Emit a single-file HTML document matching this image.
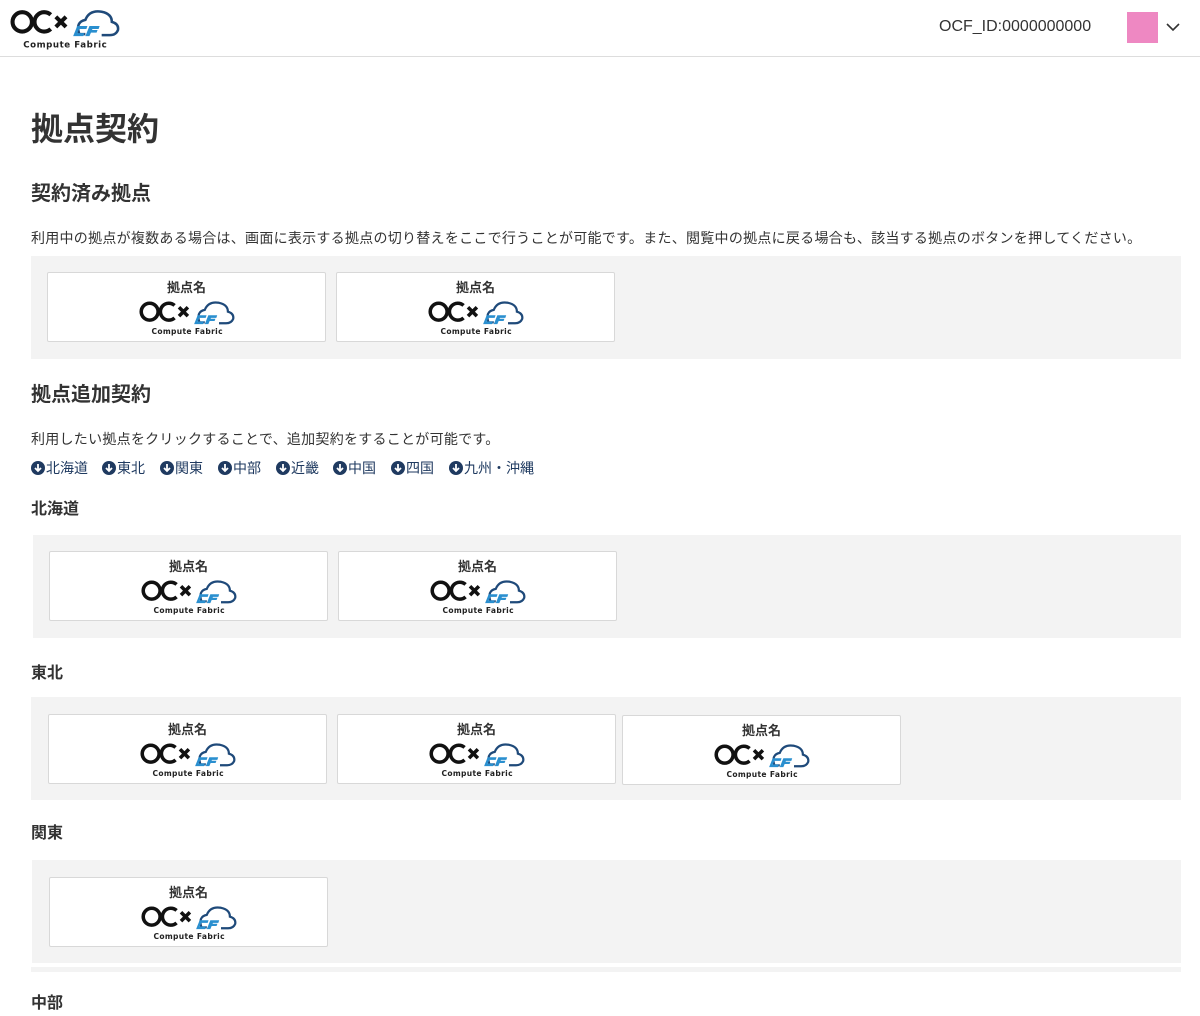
<!DOCTYPE html>
<html><head><meta charset="utf-8"><style>
*{margin:0;padding:0;box-sizing:border-box}
body{width:1200px;height:1016px;overflow:hidden;background:#fff;font-family:"Liberation Sans","Noto Sans CJK JP",sans-serif;color:#333;position:relative}
.a{position:absolute;white-space:nowrap}
.hdr{position:absolute;left:0;top:0;width:1200px;height:57px;border-bottom:1px solid #ddd}
.panel{position:absolute;background:#f3f3f3}
.card{position:absolute;width:279px;height:70px;background:#fff;border:1px solid #d8d8d8;border-radius:2px;text-align:center}
.card .t{font-size:13px;font-weight:bold;color:#333;margin-top:7px;line-height:16px}
.card svg{display:block;margin:2px auto 0}
h1{position:absolute;left:31px;top:104px;font-size:32px;font-weight:bold;color:#333}
h2{position:absolute;left:31px;font-size:20px;font-weight:bold;color:#333}
h3{position:absolute;left:31px;font-size:16px;font-weight:bold;color:#333}
p{position:absolute;left:31px;font-size:14px;color:#333;letter-spacing:0.27px}
.lk{position:absolute;top:458px;font-size:14px;color:#1f3a60;display:flex;align-items:center;height:20px;white-space:nowrap}
.lk svg{margin-right:1px}
</style></head><body>
<div class="hdr"></div>
<svg class="a" style="left:10px;top:6px" width="110" height="44" viewBox="0 0 108 40">
<circle cx="12" cy="14" r="9.5" fill="none" stroke="#111" stroke-width="4"/>
<path d="M40 7 A9.5 9.5 0 1 0 40 21" fill="none" stroke="#111" stroke-width="4"/>
<path d="M45 9 L55 19 M55 9 L45 19" stroke="#111" stroke-width="4"/>
<path d="M74 26 L68 26 Q64 14 74 12 Q78 2 90 4 Q100 6 100 14 Q107 16 106 22 Q104 27 98 27 L90 27" fill="none" stroke="#1f4a7a" stroke-width="2.5"/>
<path d="M62 28 L66 18 L76 18 L75 21 L68 21 L66 25 L73 25 L72 28Z" fill="#2a8fcf"/>
<path d="M74 28 L78 18 L88 18 L87 21 L81 21 L80.5 22 L86 22 L85 24.5 L79.5 24.5 L78 28Z" fill="#2a8fcf"/>
<text x="54" y="39" font-family="DejaVu Sans,sans-serif" font-size="8.5" font-weight="bold" text-anchor="middle" fill="#222" textLength="82" lengthAdjust="spacing">Compute Fabric</text>
</svg>
<div class="a" style="left:939px;top:18px;font-size:16px;color:#333">OCF_ID:0000000000</div>
<div class="a" style="left:1127px;top:12px;width:31px;height:31px;background:#ee88c2"></div>
<svg class="a" style="left:1166px;top:22px" width="14" height="10"><path d="M1 2 L7 8 L13 2" fill="none" stroke="#333" stroke-width="1.6"/></svg>

<h1>拠点契約</h1>
<h2 style="top:177px">契約済み拠点</h2>
<p style="top:228px">利用中の拠点が複数ある場合は、画面に表示する拠点の切り替えをここで行うことが可能です。また、閲覧中の拠点に戻る場合も、該当する拠点のボタンを押してください。</p>
<div class="panel" style="left:31px;top:256px;width:1150px;height:103px"></div>
<h2 style="top:378px">拠点追加契約</h2>
<p style="top:429px">利用したい拠点をクリックすることで、追加契約をすることが可能です。</p>
<div class="lk" style="left:31px"><svg width="14" height="14"><circle cx="7" cy="7" r="7" fill="#1f3a60"/><path d="M7 3 V10 M4 7 L7 10 L10 7" stroke="#fff" stroke-width="1.8" fill="none"/></svg>北海道</div>
<div class="lk" style="left:102px"><svg width="14" height="14"><circle cx="7" cy="7" r="7" fill="#1f3a60"/><path d="M7 3 V10 M4 7 L7 10 L10 7" stroke="#fff" stroke-width="1.8" fill="none"/></svg>東北</div>
<div class="lk" style="left:160px"><svg width="14" height="14"><circle cx="7" cy="7" r="7" fill="#1f3a60"/><path d="M7 3 V10 M4 7 L7 10 L10 7" stroke="#fff" stroke-width="1.8" fill="none"/></svg>関東</div>
<div class="lk" style="left:218px"><svg width="14" height="14"><circle cx="7" cy="7" r="7" fill="#1f3a60"/><path d="M7 3 V10 M4 7 L7 10 L10 7" stroke="#fff" stroke-width="1.8" fill="none"/></svg>中部</div>
<div class="lk" style="left:276px"><svg width="14" height="14"><circle cx="7" cy="7" r="7" fill="#1f3a60"/><path d="M7 3 V10 M4 7 L7 10 L10 7" stroke="#fff" stroke-width="1.8" fill="none"/></svg>近畿</div>
<div class="lk" style="left:333px"><svg width="14" height="14"><circle cx="7" cy="7" r="7" fill="#1f3a60"/><path d="M7 3 V10 M4 7 L7 10 L10 7" stroke="#fff" stroke-width="1.8" fill="none"/></svg>中国</div>
<div class="lk" style="left:391px"><svg width="14" height="14"><circle cx="7" cy="7" r="7" fill="#1f3a60"/><path d="M7 3 V10 M4 7 L7 10 L10 7" stroke="#fff" stroke-width="1.8" fill="none"/></svg>四国</div>
<div class="lk" style="left:449px"><svg width="14" height="14"><circle cx="7" cy="7" r="7" fill="#1f3a60"/><path d="M7 3 V10 M4 7 L7 10 L10 7" stroke="#fff" stroke-width="1.8" fill="none"/></svg>九州・沖縄</div>
<h3 style="top:495px">北海道</h3>
<div class="panel" style="left:33px;top:535px;width:1148px;height:103px"></div>
<h3 style="top:659px">東北</h3>
<div class="panel" style="left:31px;top:697px;width:1150px;height:103px"></div>
<h3 style="top:819px">関東</h3>
<div class="panel" style="left:32px;top:860px;width:1149px;height:103px"></div>
<div class="panel" style="left:31px;top:967px;width:1150px;height:5px"></div>
<h3 style="top:989px">中部</h3>

<div class="card" style="left:47px;top:272px"><div class="t">拠点名</div><svg width="96" height="38" viewBox="0 0 108 40"><circle cx="12" cy="14" r="9.5" fill="none" stroke="#111" stroke-width="4"/><path d="M40 7 A9.5 9.5 0 1 0 40 21" fill="none" stroke="#111" stroke-width="4"/><path d="M45 9 L55 19 M55 9 L45 19" stroke="#111" stroke-width="4"/><path d="M74 26 L68 26 Q64 14 74 12 Q78 2 90 4 Q100 6 100 14 Q107 16 106 22 Q104 27 98 27 L90 27" fill="none" stroke="#1f4a7a" stroke-width="2.5"/><path d="M62 28 L66 18 L76 18 L75 21 L68 21 L66 25 L73 25 L72 28Z" fill="#2a8fcf"/><path d="M74 28 L78 18 L88 18 L87 21 L81 21 L80.5 22 L86 22 L85 24.5 L79.5 24.5 L78 28Z" fill="#2a8fcf"/><text x="54" y="39" font-family="DejaVu Sans,sans-serif" font-size="8.5" font-weight="bold" text-anchor="middle" fill="#222" textLength="80" lengthAdjust="spacing">Compute Fabric</text></svg></div>
<div class="card" style="left:336px;top:272px"><div class="t">拠点名</div><svg width="96" height="38" viewBox="0 0 108 40"><circle cx="12" cy="14" r="9.5" fill="none" stroke="#111" stroke-width="4"/><path d="M40 7 A9.5 9.5 0 1 0 40 21" fill="none" stroke="#111" stroke-width="4"/><path d="M45 9 L55 19 M55 9 L45 19" stroke="#111" stroke-width="4"/><path d="M74 26 L68 26 Q64 14 74 12 Q78 2 90 4 Q100 6 100 14 Q107 16 106 22 Q104 27 98 27 L90 27" fill="none" stroke="#1f4a7a" stroke-width="2.5"/><path d="M62 28 L66 18 L76 18 L75 21 L68 21 L66 25 L73 25 L72 28Z" fill="#2a8fcf"/><path d="M74 28 L78 18 L88 18 L87 21 L81 21 L80.5 22 L86 22 L85 24.5 L79.5 24.5 L78 28Z" fill="#2a8fcf"/><text x="54" y="39" font-family="DejaVu Sans,sans-serif" font-size="8.5" font-weight="bold" text-anchor="middle" fill="#222" textLength="80" lengthAdjust="spacing">Compute Fabric</text></svg></div>
<div class="card" style="left:49px;top:551px"><div class="t">拠点名</div><svg width="96" height="38" viewBox="0 0 108 40"><circle cx="12" cy="14" r="9.5" fill="none" stroke="#111" stroke-width="4"/><path d="M40 7 A9.5 9.5 0 1 0 40 21" fill="none" stroke="#111" stroke-width="4"/><path d="M45 9 L55 19 M55 9 L45 19" stroke="#111" stroke-width="4"/><path d="M74 26 L68 26 Q64 14 74 12 Q78 2 90 4 Q100 6 100 14 Q107 16 106 22 Q104 27 98 27 L90 27" fill="none" stroke="#1f4a7a" stroke-width="2.5"/><path d="M62 28 L66 18 L76 18 L75 21 L68 21 L66 25 L73 25 L72 28Z" fill="#2a8fcf"/><path d="M74 28 L78 18 L88 18 L87 21 L81 21 L80.5 22 L86 22 L85 24.5 L79.5 24.5 L78 28Z" fill="#2a8fcf"/><text x="54" y="39" font-family="DejaVu Sans,sans-serif" font-size="8.5" font-weight="bold" text-anchor="middle" fill="#222" textLength="80" lengthAdjust="spacing">Compute Fabric</text></svg></div>
<div class="card" style="left:338px;top:551px"><div class="t">拠点名</div><svg width="96" height="38" viewBox="0 0 108 40"><circle cx="12" cy="14" r="9.5" fill="none" stroke="#111" stroke-width="4"/><path d="M40 7 A9.5 9.5 0 1 0 40 21" fill="none" stroke="#111" stroke-width="4"/><path d="M45 9 L55 19 M55 9 L45 19" stroke="#111" stroke-width="4"/><path d="M74 26 L68 26 Q64 14 74 12 Q78 2 90 4 Q100 6 100 14 Q107 16 106 22 Q104 27 98 27 L90 27" fill="none" stroke="#1f4a7a" stroke-width="2.5"/><path d="M62 28 L66 18 L76 18 L75 21 L68 21 L66 25 L73 25 L72 28Z" fill="#2a8fcf"/><path d="M74 28 L78 18 L88 18 L87 21 L81 21 L80.5 22 L86 22 L85 24.5 L79.5 24.5 L78 28Z" fill="#2a8fcf"/><text x="54" y="39" font-family="DejaVu Sans,sans-serif" font-size="8.5" font-weight="bold" text-anchor="middle" fill="#222" textLength="80" lengthAdjust="spacing">Compute Fabric</text></svg></div>
<div class="card" style="left:48px;top:714px"><div class="t">拠点名</div><svg width="96" height="38" viewBox="0 0 108 40"><circle cx="12" cy="14" r="9.5" fill="none" stroke="#111" stroke-width="4"/><path d="M40 7 A9.5 9.5 0 1 0 40 21" fill="none" stroke="#111" stroke-width="4"/><path d="M45 9 L55 19 M55 9 L45 19" stroke="#111" stroke-width="4"/><path d="M74 26 L68 26 Q64 14 74 12 Q78 2 90 4 Q100 6 100 14 Q107 16 106 22 Q104 27 98 27 L90 27" fill="none" stroke="#1f4a7a" stroke-width="2.5"/><path d="M62 28 L66 18 L76 18 L75 21 L68 21 L66 25 L73 25 L72 28Z" fill="#2a8fcf"/><path d="M74 28 L78 18 L88 18 L87 21 L81 21 L80.5 22 L86 22 L85 24.5 L79.5 24.5 L78 28Z" fill="#2a8fcf"/><text x="54" y="39" font-family="DejaVu Sans,sans-serif" font-size="8.5" font-weight="bold" text-anchor="middle" fill="#222" textLength="80" lengthAdjust="spacing">Compute Fabric</text></svg></div>
<div class="card" style="left:337px;top:714px"><div class="t">拠点名</div><svg width="96" height="38" viewBox="0 0 108 40"><circle cx="12" cy="14" r="9.5" fill="none" stroke="#111" stroke-width="4"/><path d="M40 7 A9.5 9.5 0 1 0 40 21" fill="none" stroke="#111" stroke-width="4"/><path d="M45 9 L55 19 M55 9 L45 19" stroke="#111" stroke-width="4"/><path d="M74 26 L68 26 Q64 14 74 12 Q78 2 90 4 Q100 6 100 14 Q107 16 106 22 Q104 27 98 27 L90 27" fill="none" stroke="#1f4a7a" stroke-width="2.5"/><path d="M62 28 L66 18 L76 18 L75 21 L68 21 L66 25 L73 25 L72 28Z" fill="#2a8fcf"/><path d="M74 28 L78 18 L88 18 L87 21 L81 21 L80.5 22 L86 22 L85 24.5 L79.5 24.5 L78 28Z" fill="#2a8fcf"/><text x="54" y="39" font-family="DejaVu Sans,sans-serif" font-size="8.5" font-weight="bold" text-anchor="middle" fill="#222" textLength="80" lengthAdjust="spacing">Compute Fabric</text></svg></div>
<div class="card" style="left:622px;top:715px"><div class="t">拠点名</div><svg width="96" height="38" viewBox="0 0 108 40"><circle cx="12" cy="14" r="9.5" fill="none" stroke="#111" stroke-width="4"/><path d="M40 7 A9.5 9.5 0 1 0 40 21" fill="none" stroke="#111" stroke-width="4"/><path d="M45 9 L55 19 M55 9 L45 19" stroke="#111" stroke-width="4"/><path d="M74 26 L68 26 Q64 14 74 12 Q78 2 90 4 Q100 6 100 14 Q107 16 106 22 Q104 27 98 27 L90 27" fill="none" stroke="#1f4a7a" stroke-width="2.5"/><path d="M62 28 L66 18 L76 18 L75 21 L68 21 L66 25 L73 25 L72 28Z" fill="#2a8fcf"/><path d="M74 28 L78 18 L88 18 L87 21 L81 21 L80.5 22 L86 22 L85 24.5 L79.5 24.5 L78 28Z" fill="#2a8fcf"/><text x="54" y="39" font-family="DejaVu Sans,sans-serif" font-size="8.5" font-weight="bold" text-anchor="middle" fill="#222" textLength="80" lengthAdjust="spacing">Compute Fabric</text></svg></div>
<div class="card" style="left:49px;top:877px"><div class="t">拠点名</div><svg width="96" height="38" viewBox="0 0 108 40"><circle cx="12" cy="14" r="9.5" fill="none" stroke="#111" stroke-width="4"/><path d="M40 7 A9.5 9.5 0 1 0 40 21" fill="none" stroke="#111" stroke-width="4"/><path d="M45 9 L55 19 M55 9 L45 19" stroke="#111" stroke-width="4"/><path d="M74 26 L68 26 Q64 14 74 12 Q78 2 90 4 Q100 6 100 14 Q107 16 106 22 Q104 27 98 27 L90 27" fill="none" stroke="#1f4a7a" stroke-width="2.5"/><path d="M62 28 L66 18 L76 18 L75 21 L68 21 L66 25 L73 25 L72 28Z" fill="#2a8fcf"/><path d="M74 28 L78 18 L88 18 L87 21 L81 21 L80.5 22 L86 22 L85 24.5 L79.5 24.5 L78 28Z" fill="#2a8fcf"/><text x="54" y="39" font-family="DejaVu Sans,sans-serif" font-size="8.5" font-weight="bold" text-anchor="middle" fill="#222" textLength="80" lengthAdjust="spacing">Compute Fabric</text></svg></div>
</body></html>
